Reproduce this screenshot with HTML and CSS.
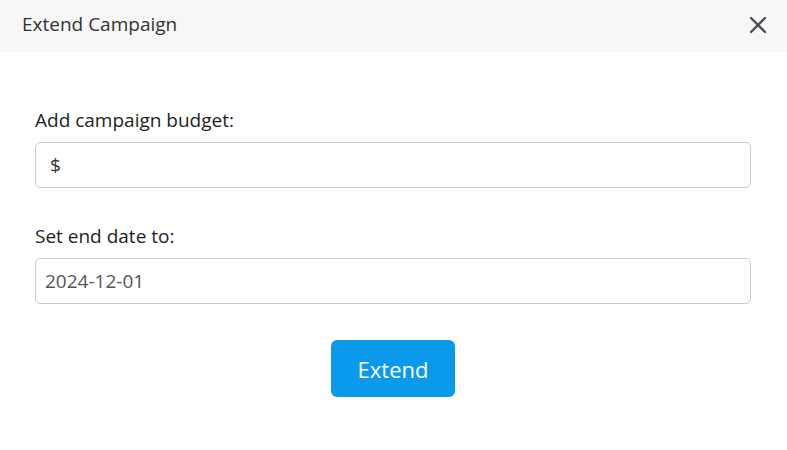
FILE: index.html
```html
<!DOCTYPE html>
<html>
<head>
<meta charset="utf-8">
<link rel="stylesheet" href="styles.css">
</head>
<body>
<div class="modal">
  <div class="modal-header">
    <span class="modal-title">Extend Campaign</span>
    <button class="close" aria-label="Close">
      <svg width="18" height="18" viewBox="0 0 18 18"><path d="M2 2L16 16M16 2L2 16" stroke="#4b4e58" stroke-width="2.4" stroke-linecap="round"/></svg>
    </button>
  </div>
  <div class="modal-body">
    <div class="field">
      <label class="label">Add campaign budget:</label>
      <div class="input money"><span class="prefix">$</span></div>
    </div>
    <div class="field">
      <label class="label">Set end date to:</label>
      <div class="input date">2024-12-01</div>
    </div>
    <div class="actions">
      <button class="btn">Extend</button>
    </div>
  </div>
</div>
</body>
</html>
```
FILE: styles.css
```css
* { box-sizing: border-box; }
html, body { margin: 0; padding: 0; background: #fff; }
body { font-family: "Open Sans", "Noto Sans", sans-serif; width: 787px; height: 450px; overflow: hidden; }
.modal { width: 787px; }
.modal-header {
  height: 52px;
  background: #f7f7f7;
  display: flex;
  align-items: center;
  justify-content: space-between;
  padding: 0 20px 0 22px;
}
.modal-title { font-size: 19px; color: #333; line-height: 1; margin-top: -4px; }
.close { border: 0; background: none; padding: 0; display: flex; margin-top: -3px; }
.modal-body { padding: 57px 36px 0 35px; display: flex; flex-direction: column; }
.field { display: flex; flex-direction: column; }
.field + .field { margin-top: 37px; }
.label { font-size: 19px; color: #1e1e1e; line-height: 22px; margin-bottom: 11px; }
.input {
  height: 46px;
  border: 1px solid #ccc;
  border-radius: 5px;
  display: flex;
  align-items: center;
  font-size: 19px;
  color: #555;
}
.money { padding-left: 14px; color: #333; }
.date { padding-left: 9px; }
.actions { display: flex; justify-content: center; margin-top: 36px; }
.btn {
  width: 124px;
  height: 57px;
  border: 0;
  border-radius: 6px;
  background: #0b9aeb;
  color: #fff;
  font-family: "Open Sans", "Noto Sans", sans-serif;
  font-size: 22px;
}
```
